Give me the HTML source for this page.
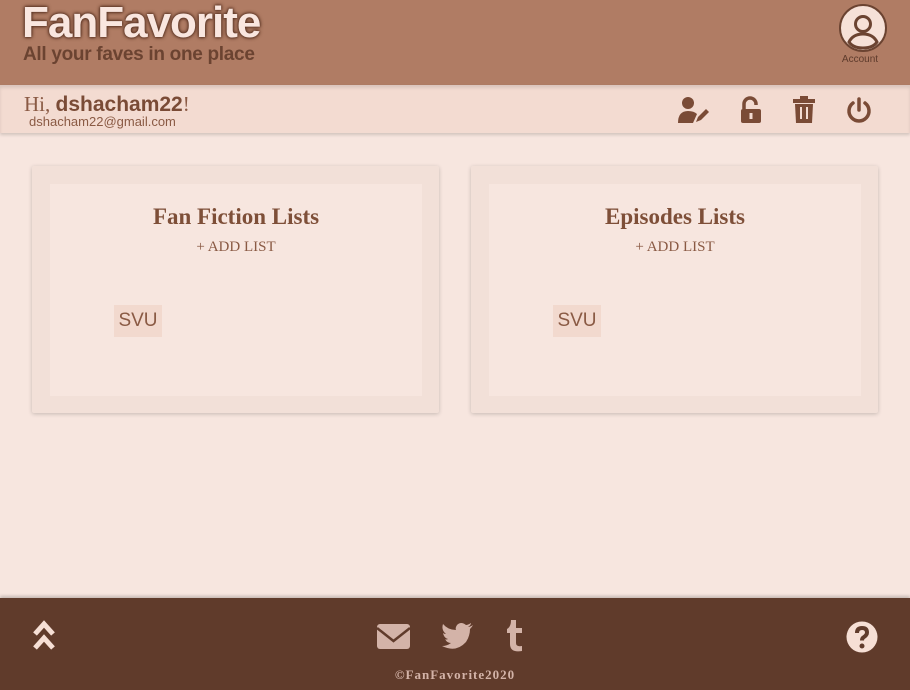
<!DOCTYPE html>
<html><head><meta charset="utf-8"><style>
*{margin:0;padding:0;box-sizing:border-box}
body{width:910px;height:690px;background:#f7e6df;font-family:"Liberation Sans",sans-serif;position:relative;overflow:hidden}
.hdr{position:absolute;left:0;top:0;width:910px;height:85px;background:#b07c64}
.logo{position:absolute;left:22px;top:-2px;font:900 44px "Liberation Sans",sans-serif;color:#f9e6df;letter-spacing:-1px;text-shadow:0 0 4px #5e3726,0 0 3px #5e3726,0 0 2px #5e3726}
.tag{position:absolute;left:23px;top:44px;font:bold 19px "Liberation Sans",sans-serif;color:#6b4331;letter-spacing:-0.3px}
.acct{position:absolute;left:839px;top:4px;width:48px;height:48px;border-radius:50%;border:2px solid #6b4331;background:#f6e1d8;overflow:hidden}
.acctl{position:absolute;left:839px;top:54px;width:42px;text-align:center;font-size:10px;color:#5e3b2c}
.bar{position:absolute;left:0;top:85px;width:910px;height:48px;background:#f3dbd1;box-shadow:0 2px 3px rgba(0,0,0,.15), inset 0 3px 3px rgba(0,0,0,.1)}
.hi{position:absolute;left:24px;top:92px;font:21px "Liberation Serif",serif;color:#8a5a44}
.hi b{font-family:"Liberation Sans",sans-serif;font-weight:bold;color:#7a4b36}
.em{position:absolute;left:29px;top:114px;font-size:13px;color:#8a5a44}
.card{position:absolute;top:166px;width:407px;height:247px;background:#f2e0d8;border-radius:2px;box-shadow:0 1px 4px rgba(0,0,0,.2)}
.in{position:absolute;left:18px;top:18px;width:372px;height:212px;background:#f7e6df}
.t{position:absolute;top:20px;width:100%;text-align:center;font:bold 23px "Liberation Serif",serif;color:#7e4f38}
.a{position:absolute;top:55px;width:100%;text-align:center;font:15px "Liberation Serif",serif;color:#8a5a44}
.svu{position:absolute;left:64px;top:121px;width:48px;height:32px;background:#f2d9ce;color:#8a5a44;font-size:19px;line-height:32px;text-align:center}
.ft{position:absolute;left:0;top:598px;width:910px;height:92px;background:#603b2b;box-shadow:0 -2px 3px rgba(0,0,0,.2)}
.copy{position:absolute;top:667px;width:910px;text-align:center;font:bold 13px "Liberation Serif",serif;color:#d3b3a8;letter-spacing:1px}
</style></head><body>
<div class="hdr"></div>
<div class="logo">FanFavorite</div>
<div class="tag">All your faves in one place</div>
<div class="acct"><svg width="48" height="48" viewBox="0 0 48 48"><circle cx="22" cy="18" r="7.5" fill="none" stroke="#6b4331" stroke-width="3"/><path d="M8 36 Q12 28 22 28 Q32 28 36 36 Q32 42 22 42 Q12 42 8 36Z" fill="none" stroke="#6b4331" stroke-width="3"/></svg></div>
<div class="acctl">Account</div>
<div class="bar"></div>
<div class="hi">Hi, <b>dshacham22</b>!</div>
<div class="em">dshacham22@gmail.com</div>
<svg style="position:absolute;left:676px;top:96px" width="36" height="28" viewBox="0 0 36 28"><circle cx="12" cy="7" r="6" fill="#7a4b36"/><path d="M2 27 Q2 15 12 15 Q18 15 21 18 L17 27Z" fill="#7a4b36"/><path d="M20 26 L22 21 L30 13 L33 16 L25 24Z" fill="#7a4b36"/></svg>
<svg style="position:absolute;left:739px;top:96px" width="24" height="28" viewBox="0 0 24 28"><path d="M5 13 V8 A6 6 0 0 1 17 8 V9" fill="none" stroke="#7a4b36" stroke-width="3.5"/><rect x="2" y="13" width="20" height="14" rx="2" fill="#7a4b36"/><rect x="10.5" y="17" width="3" height="6" fill="#f3dbd1"/></svg>
<svg style="position:absolute;left:792px;top:96px" width="24" height="28" viewBox="0 0 24 28"><rect x="1" y="3" width="22" height="4" fill="#7a4b36"/><rect x="8" y="0" width="8" height="3" fill="#7a4b36"/><path d="M3 8 H21 L20 27 H4Z" fill="#7a4b36"/><rect x="8" y="11" width="2" height="12" fill="#f3dbd1"/><rect x="14" y="11" width="2" height="12" fill="#f3dbd1"/></svg>
<svg style="position:absolute;left:845px;top:96px" width="28" height="28" viewBox="0 0 28 28"><path d="M8 7 A10 10 0 1 0 20 7" fill="none" stroke="#7a4b36" stroke-width="3.5" stroke-linecap="round"/><line x1="14" y1="3" x2="14" y2="14" stroke="#7a4b36" stroke-width="3.5" stroke-linecap="round"/></svg>
<div class="card" style="left:32px"><div class="in"><div class="t">Fan Fiction Lists</div><div class="a">+ ADD LIST</div><div class="svu">SVU</div></div></div>
<div class="card" style="left:471px"><div class="in"><div class="t">Episodes Lists</div><div class="a">+ ADD LIST</div><div class="svu">SVU</div></div></div>
<div class="ft"></div>
<svg style="position:absolute;left:31px;top:620px" width="28" height="32" viewBox="0 0 28 32"><path d="M4 14 L13 4 L22 14" fill="none" stroke="#f6dfd5" stroke-width="5"/><path d="M4 28 L13 18 L22 28" fill="none" stroke="#f6dfd5" stroke-width="5"/></svg>
<svg style="position:absolute;left:377px;top:624px" width="33" height="25" viewBox="0 0 33 25"><rect x="0" y="0" width="33" height="25" rx="3" fill="#d3b3a8"/><path d="M0 4 L16.5 17 L33 4" fill="none" stroke="#603b2b" stroke-width="2.5"/></svg>
<svg style="position:absolute;left:442px;top:622px" width="32" height="28" viewBox="0 0 32 28"><path d="M31 3 Q28 5 26 5 Q29 3 29 1 Q26 3 24 3 Q19 -1 15 3 Q13 6 14 8 Q6 8 1 2 Q-1 8 4 12 Q2 12 1 11 Q2 16 6 17 Q4 18 3 17 Q5 21 9 21 Q5 24 0 24 Q14 31 24 20 Q28 14 28 7 Q30 5 31 3Z" fill="#d3b3a8"/></svg>
<svg style="position:absolute;left:506px;top:620px" width="20" height="32" viewBox="0 0 20 32"><path d="M5 0 H10 V8 H16 V13 H10 V23 Q10 27 16 26 V31 Q4 33 4 24 V13 H1 V9 Q5 7 5 0Z" fill="#d3b3a8"/></svg>
<svg style="position:absolute;left:846px;top:621px" width="32" height="32" viewBox="0 0 32 32"><circle cx="16" cy="16" r="15.5" fill="#f6dfd5"/><path d="M11 12 Q11 7 16 7 Q21 7 21 11.5 Q21 14 18 16 Q16 17 16 19.5" fill="none" stroke="#603b2b" stroke-width="4"/><circle cx="16" cy="25" r="2.5" fill="#603b2b"/></svg>
<div class="copy">©FanFavorite2020</div>
</body></html>
